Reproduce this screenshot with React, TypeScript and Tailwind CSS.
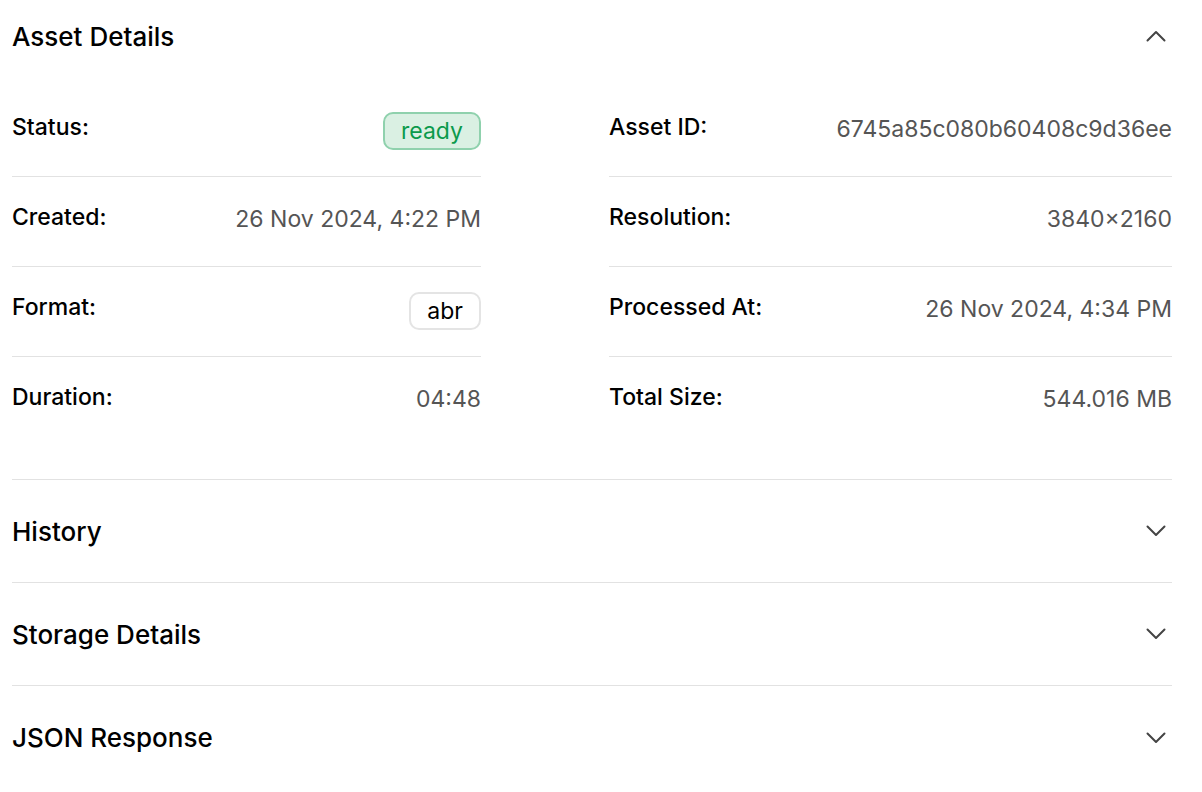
import React from 'react'

const left = [
  { label: 'Status:', value: 'ready', kind: 'status' },
  { label: 'Created:', value: '26 Nov 2024, 4:22 PM' },
  { label: 'Format:', value: 'abr', kind: 'tag' },
  { label: 'Duration:', value: '04:48' },
]

const right = [
  { label: 'Asset ID:', value: '6745a85c080b60408c9d36ee' },
  { label: 'Resolution:', value: '3840×2160' },
  { label: 'Processed At:', value: '26 Nov 2024, 4:34 PM' },
  { label: 'Total Size:', value: '544.016 MB' },
]

function Chevron({ up }: { up?: boolean }) {
  return (
    <svg width="20" height="12" viewBox="0 0 20 12" fill="none" className="mr-[6px]">
      <path
        d={up ? 'M1.5 10.5 L10 2 L18.5 10.5' : 'M1.5 1.5 L10 10 L18.5 1.5'}
        stroke="#444"
        strokeWidth="2"
        strokeLinecap="round"
        strokeLinejoin="round"
      />
    </svg>
  )
}

function DetailRow({ label, value, kind, last }: { label: string; value: string; kind?: string; last?: boolean }) {
  return (
    <div className={`flex items-start justify-between pt-[25px] h-[90px] ${last ? '' : 'border-b border-[#e2e2e2]'}`}>
      <span className="text-[23px] leading-[30px] font-medium text-black">{label}</span>
      {kind === 'status' ? (
        <span className="h-[38px] px-4 flex items-center rounded-[10px] border-2 border-[#8fd1ad] bg-[#daf0e3] text-[23px] text-[#0b9a4c]">
          {value}
        </span>
      ) : kind === 'tag' ? (
        <span className="h-[38px] px-4 flex items-center rounded-[10px] border-2 border-[#e4e4e4] bg-white text-[23px] text-black">
          {value}
        </span>
      ) : (
        <span className="text-[23px] leading-[34px] text-[#555]">{value}</span>
      )}
    </div>
  )
}

function Collapsed({ title, last }: { title: string; last?: boolean }) {
  return (
    <div className={`flex h-[103px] items-center justify-between ${last ? '' : 'border-b border-[#e2e2e2]'}`}>
      <h2 className="text-[26px] font-medium text-black">{title}</h2>
      <Chevron />
    </div>
  )
}

export default function App() {
  return (
    <main className="min-h-screen bg-white px-[12px] pr-[30px]" style={{ fontFamily: 'Inter, "Noto Sans", sans-serif' }}>
      {/* Asset details, open */}
      <section className="border-b border-[#e2e2e2]">
        <div className="flex h-[72px] items-center justify-between">
          <h2 className="text-[26px] font-medium text-black">Asset Details</h2>
          <Chevron up />
        </div>
        <div className="grid grid-cols-[469px_563px] gap-x-[128px] pt-[15px] pb-[32px]">
          <div>
            {left.map((r, i) => (
              <DetailRow key={r.label} {...r} last={i === left.length - 1} />
            ))}
          </div>
          <div>
            {right.map((r, i) => (
              <DetailRow key={r.label} {...r} last={i === right.length - 1} />
            ))}
          </div>
        </div>
      </section>

      <Collapsed title="History" />
      <Collapsed title="Storage Details" />
      <Collapsed title="JSON Response" last />
    </main>
  )
}
